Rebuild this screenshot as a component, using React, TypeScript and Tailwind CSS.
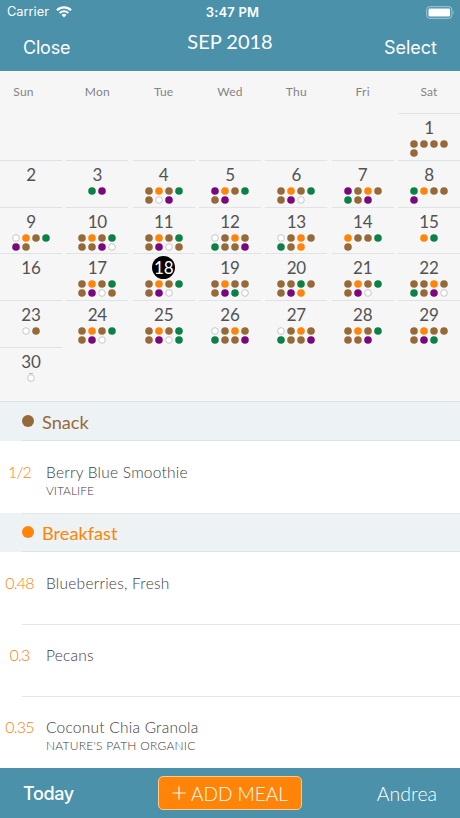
import React from "react";

const dotColors: Record<string, string> = {
  B: "bg-[#966a38]",
  O: "bg-[#ff8408]",
  G: "bg-[#0b8048]",
  P: "bg-[#78087c]",
  W: "bg-white border border-[#c4c4c4]",
};

const weekdays = ["Sun", "Mon", "Tue", "Wed", "Thu", "Fri", "Sat"];

const meals: string[] = [
  "BBBBB", "", "GP", "BOBGBWP", "POBGBP", "BOBGBPW", "PBOBGBP", "GOBBP",
  "WOBGPB", "BOBGBBPW", "BOBGBPWB", "WBOBGBBP", "WBOBGBO", "OBBGB", "OG",
  "", "BOBGBPWB", "BOBGBPW", "BOBBBPGW", "BBGBBPO", "BOBGBPW", "BBOBGBPW",
  "WB", "BOBGBPW", "BOBGBPWG", "WBOBGBBP", "WBOBGBBP", "BOBGBBP", "BOBBBPG", "W",
];

function Day({ day, dots }: { day: number; dots: string }) {
  const selected = day === 18;
  return (
    <div className="flex flex-col items-center border-t border-[#e0e3e4]">
      <div
        className={
          "mt-[2px] flex h-[23px] w-[23px] items-center justify-center rounded-full text-[17px] leading-none tracking-[-0.2px] " +
          (selected ? "bg-black text-white" : "text-[#525252]")
        }
      >
        {day}
      </div>
      {day === 30 && <div className="-mb-px h-px w-[4px] shrink-0 bg-[#b8b8b8]" />}
      <div className="mt-[1px] flex max-w-[38px] flex-wrap gap-x-[2px] gap-y-[1px]">
        {dots.split("").map((d, i) => (
          <span key={i} className={"h-2 w-2 scale-95 rounded-full " + dotColors[d]} />
        ))}
      </div>
    </div>
  );
}

function Calendar() {
  return (
    <section className="h-[331px] shrink-0 border-b border-[#dbe2e5] bg-[#f6f6f6]">
      <div className="grid h-[42px] grid-cols-7 gap-x-[4.33px] text-center text-[12px] leading-[41px] tracking-[0.2px] text-[#848484]">
        {weekdays.map((w) => (
          <div key={w} className={w === "Sun" ? "pr-[15px]" : ""}>{w}</div>
        ))}
      </div>
      <div className="grid auto-rows-[46.75px] grid-cols-7 gap-x-[4.33px]">
        <div className="col-span-6" />
        {meals.map((dots, i) => (
          <Day key={i} day={i + 1} dots={dots} />
        ))}
      </div>
    </section>
  );
}

function MealHeader({ name, text, dot }: { name: string; text: string; dot: string }) {
  return (
    <div className="flex h-[39px] shrink-0 items-center bg-[#edf2f5] pl-[22px]">
      <div className="flex h-full flex-1 items-center border-b border-[#dde4e8]">
        <span className={"h-[12px] w-[12px] rounded-full " + dot} />
        <span className={"ml-[8px] mt-[3px] text-[18.2px] leading-none " + text}>{name}</span>
      </div>
    </div>
  );
}

function FoodRow({ qty, name, brand, last }: { qty: string; name: string; brand?: string; last?: boolean }) {
  return (
    <div className="flex h-[72px] shrink-0 bg-white">
      <div className="w-[39px] pt-[22px] text-center text-[16px] leading-[18px] font-light tracking-[-0.8px] text-[#ff7f08]">{qty}</div>
      <div className="relative flex-1 pl-[7px] pt-[22px]">
        <div className="text-[15.5px] leading-[18px] font-light tracking-[0.24px] text-[#404040]">{name}</div>
        {brand && (
          <div className={"mt-[2px] text-[12px] leading-[15px] font-light text-[#404040] " + (last ? "tracking-[0.25px]" : "")}>
            {brand}
          </div>
        )}
        {!last && <div className="absolute bottom-[-1px] right-0 left-[-17px] h-px bg-[#e4e6e7]" />}
      </div>
    </div>
  );
}

export default function App() {
  return (
    <main className="flex h-[818px] w-[460px] flex-col overflow-hidden bg-white font-['Lato','Liberation_Sans',sans-serif]">
      <header className="h-[71px] shrink-0 bg-[#4a91a9] text-white">
        <div className="grid h-6 grid-cols-3 items-center pr-[5px] pl-[7px] font-['Inter','Liberation_Sans',sans-serif] text-[13px] leading-none">
          <div className="flex items-center gap-[7px]">
            <span className="text-[12.8px]">Carrier</span>
            <svg width="16" height="12" viewBox="0 0 16 12" fill="none" stroke="white">
              <path d="M1 4.2a10 10 0 0 1 14 0" strokeWidth="2.3" />
              <path d="M3.7 7a6.2 6.2 0 0 1 8.6 0" strokeWidth="2.1" />
              <path d="M8 11.4 5.6 9a3.4 3.4 0 0 1 4.8 0Z" fill="white" stroke="none" />
            </svg>
          </div>
          <div className="pl-[3px] text-center font-semibold tracking-[0.15px]">3:47 PM</div>
          <div className="flex justify-end">
            <svg width="29" height="13" viewBox="0 0 29 13">
              <rect x="0.7" y="0.7" width="25.2" height="11.6" rx="3" fill="none" stroke="#a8cad6" />
              <rect x="2.5" y="2.4" width="21.6" height="8.2" rx="1.3" fill="white" />
              <path d="M27 4.7q1.6 1.8 0 3.6Z" fill="#a8cad6" />
            </svg>
          </div>
        </div>
        <div className="grid grid-cols-3 items-start px-[23px]">
          <span className="pt-[14px] font-['Inter','Liberation_Sans',sans-serif] text-[18px] leading-5 tracking-[-0.2px]">Close</span>
          <span className="pt-[7px] text-center text-[20px] leading-5 whitespace-nowrap">SEP 2018</span>
          <span className="pt-[14px] text-right font-['Inter','Liberation_Sans',sans-serif] text-[18px] leading-5">Select</span>
        </div>
      </header>
      <Calendar />
      <MealHeader name="Snack" text="text-[#966a38]" dot="bg-[#966a38]" />
      <FoodRow qty="1/2" name="Berry Blue Smoothie" brand="VITALIFE" />
      <MealHeader name="Breakfast" text="text-[#ff8408]" dot="bg-[#ff8408]" />
      <FoodRow qty="0.48" name="Blueberries, Fresh" />
      <FoodRow qty="0.3" name="Pecans" />
      <FoodRow qty="0.35" name="Coconut Chia Granola" brand="NATURE'S PATH ORGANIC" last />
      <footer className="grid flex-1 grid-cols-[135px_144px_135px] items-center bg-[#4a91a9] px-[23px] text-white">
        <span className="font-['Inter','Liberation_Sans',sans-serif] text-[18px] font-medium tracking-[-0.4px]">Today</span>
        <button className="flex h-[34px] items-center justify-center gap-[5px] rounded-[5px] border border-[#ffc98e] bg-[#ff8408] text-[19px] font-light whitespace-nowrap">
          <svg width="14" height="14" viewBox="0 0 14 14" stroke="white" strokeWidth="1.2">
            <path d="M7 .5v13M.5 7h13" />
          </svg>
          <span className="mt-[3px]">ADD MEAL</span>
        </button>
        <span className="pt-px text-right text-[19.5px] font-light">Andrea</span>
      </footer>
    </main>
  );
}
